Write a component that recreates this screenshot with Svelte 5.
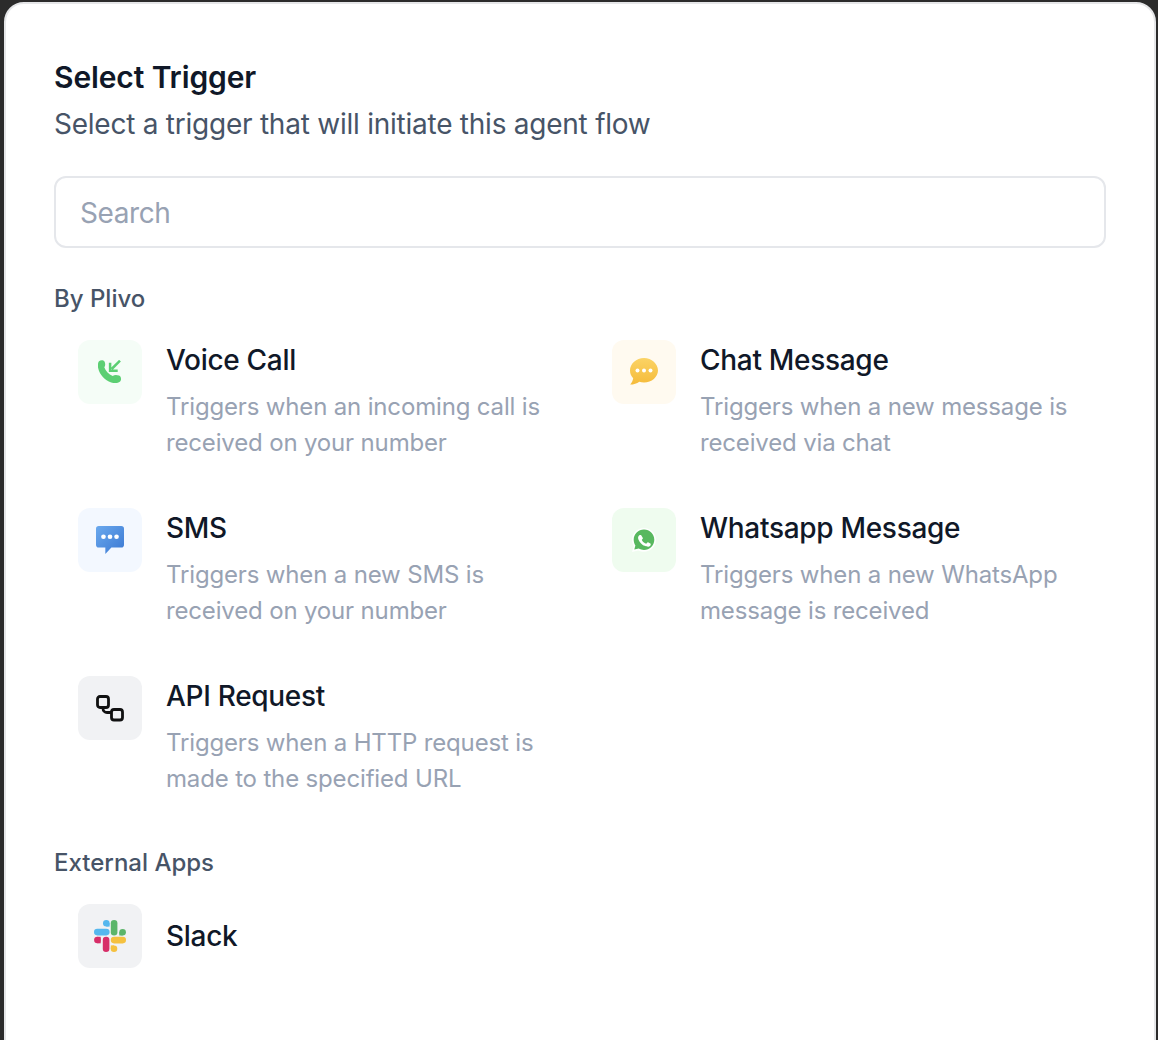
<script>
  const plivo = [
    { id: 'voice', name: 'Voice Call', tile: '#f5fdf7', lines: ['Triggers when an incoming call is', 'received on your number'] },
    { id: 'chat', name: 'Chat Message', tile: '#fffaf0', lines: ['Triggers when a new message is', 'received via chat'] },
    { id: 'sms', name: 'SMS', tile: '#f3f8ff', lines: ['Triggers when a new SMS is', 'received on your number'] },
    { id: 'whatsapp', name: 'Whatsapp Message', tile: '#effcef', lines: ['Triggers when a new WhatsApp', 'message is received'] },
    { id: 'api', name: 'API Request', tile: '#f1f2f4', lines: ['Triggers when a HTTP request is', 'made to the specified URL'] }
  ];
</script>

{#snippet icon(id)}
  {#if id === 'voice'}
    <svg width="24" height="24" viewBox="0 0 24 24" fill="none">
      <path d="M1 1.200C2.500-.2 5.500-.2 6.500 1.500 7.500 3.400 7.500 6 6.300 7.300c1.300 3.800 4.500 7 8.400 8.700 1.500-1.100 4-1.100 6.300-.4 2.400.8 2.700 4.600.8 6.200-1.600 1.300-5 1.700-8.600.7C6.800 20.500 1.700 14.800.200 8.300-.4 5.600-.2 2.600 1 1.200z" fill="#5ccf73"/>
      <path d="M22 .7L13.700 9M12.100 2.700V10.700H19.700" stroke="#5ccf73" stroke-width="2.500"/>
    </svg>
  {:else if id === 'chat'}
    <svg width="30" height="30" viewBox="0 0 30 30" fill="none">
      <defs><linearGradient id="chatfill" x1="0" y1="0" x2="0" y2="1"><stop offset="0" stop-color="#fbd365"/><stop offset="1" stop-color="#f5bb3a"/></linearGradient></defs>
      <path d="M15 1C7.300 1 1 6.600 1 13.500c0 3 1.200 5.700 3.200 7.800-.3 2.100-1.300 4.200-3 6.300 3.500 0 6.700-1.100 9.100-2.900 1.500.5 3 .8 4.700.8 7.700 0 14-5.600 14-12S22.700 1 15 1z" fill="url(#chatfill)"/>
      <circle cx="8.500" cy="13.500" r="2" fill="#fff"/><circle cx="15" cy="13.500" r="2" fill="#fff"/><circle cx="21.500" cy="13.500" r="2" fill="#fff"/>
    </svg>
  {:else if id === 'sms'}
    <svg width="28" height="28" viewBox="0 0 30 30" fill="none">
      <defs><linearGradient id="smsfill" x1="0" y1="0" x2="1" y2="1"><stop offset="0" stop-color="#6aa9ee"/><stop offset="1" stop-color="#3a78d2"/></linearGradient></defs>
      <path d="M3 0h24a3 3 0 0 1 3 3v17a3 3 0 0 1-3 3H16.500L10 30v-7H3a3 3 0 0 1-3-3V3a3 3 0 0 1 3-3z" fill="url(#smsfill)"/>
      <circle cx="8" cy="11.500" r="2.500" fill="#fff"/><circle cx="15" cy="11.500" r="2.500" fill="#fff"/><circle cx="22" cy="11.500" r="2.500" fill="#fff"/>
    </svg>
  {:else if id === 'whatsapp'}
    <svg width="26" height="26" viewBox="0 0 26 26" fill="none">
      <path d="M13 1C6.400 1 1 6.300 1 12.800c0 2.200.6 4.300 1.700 6.100L1 25l6.300-1.600c1.700.9 3.700 1.400 5.700 1.400 6.600 0 12-5.300 12-12S19.600 1 13 1z" fill="#fff" fill-opacity=".9"/>
      <path d="M13 2.500C7.300 2.500 2.700 7 2.700 12.700c0 2.100.6 4 1.700 5.700l-1.100 4.200 4.400-1.100c1.600.9 3.400 1.400 5.300 1.400 5.700 0 10.300-4.500 10.300-10.200S18.700 2.500 13 2.500z" fill="#58b85f"/>
      <path d="M9.700 7.300c-.3-.6-.6-.6-.9-.6h-.8c-.3 0-.7.100-1.100.500-.4.400-1.400 1.400-1.400 3.300s1.400 3.800 1.600 4.100c.2.300 2.800 4.400 6.900 6 3.400 1.300 4.100 1.100 4.800 1 .8-.1 2.400-1 2.700-1.900.3-.9.300-1.700.2-1.900l-3.400-1.800c-.3-.1-.6-.2-.8.200l-1.200 1.400c-.2.200-.4.300-.8.100-.4-.2-1.600-.6-3-1.800-1.100-1-1.900-2.200-2.100-2.600-.2-.4 0-.6.200-.8l.6-.7c.2-.2.200-.4.400-.6.100-.3 0-.5 0-.7z" transform="translate(2.800 2.800) scale(.78)" fill="#fff"/>
    </svg>
  {:else}
    <svg width="28" height="28" viewBox="0 0 28 28" fill="none" stroke="#111" stroke-width="2.800">
      <rect x="1.500" y="2.500" width="11" height="11" rx="2.500"/>
      <rect x="15.500" y="15.500" width="11" height="10.500" rx="2.500"/>
      <path d="M7 13.500v1a4 4 0 0 0 4 4h4.500"/>
    </svg>
  {/if}
{/snippet}

<main class="card">
  <h1>Select Trigger</h1>
  <p class="sub">Select a trigger that will initiate this agent flow</p>
  <div class="search">Search</div>

  <h2>By Plivo</h2>
  <div class="grid">
    {#each plivo as t}
      <div class="item">
        <div class="tile" style="background:{t.tile}">{@render icon(t.id)}</div>
        <div class="info">
          <div class="name">{t.name}</div>
          {#each t.lines as line}
            <div class="desc">{line}</div>
          {/each}
        </div>
      </div>
    {/each}
  </div>

  <h2 class="ext">External Apps</h2>
  <div class="item slack">
    <div class="tile" style="background:#f1f2f4">
      <svg width="32" height="32" viewBox="0 0 32 32" fill="none">
        <circle cx="12.300" cy="3.300" r="3.300" fill="#55b7ee"/>
        <rect x="12.300" y="3.300" width="3.300" height="3.300" fill="#55b7ee"/>
        <rect x="0" y="8.800" width="15.600" height="6.600" rx="3.300" fill="#55b7ee"/>
        <rect x="16.800" y="0" width="6.600" height="15.500" rx="3.300" fill="#5cb56a"/>
        <circle cx="28.600" cy="12.200" r="3.300" fill="#5cb56a"/>
        <rect x="25.300" y="12.200" width="3.300" height="3.300" fill="#5cb56a"/>
        <rect x="16.800" y="16.800" width="15.200" height="6.600" rx="3.300" fill="#f5c13f"/>
        <circle cx="20" cy="28.700" r="3.300" fill="#f5c13f"/>
        <rect x="16.800" y="25.400" width="3.200" height="3.300" fill="#f5c13f"/>
        <rect x="8.800" y="16.800" width="6.600" height="15.200" rx="3.300" fill="#d72e68"/>
        <circle cx="3.400" cy="20" r="3.300" fill="#d72e68"/>
        <rect x="3.400" y="16.800" width="3.300" height="6.500" fill="#d72e68"/>
      </svg>
    </div>
    <div class="name">Slack</div>
  </div>
</main>

<style>
  :global(body) {
    background: #2b2b2b;
    font-family: Inter, "Liberation Sans", sans-serif;
    overflow: hidden;
  }

  .card {
    box-sizing: border-box;
    margin: 2px 2px 0 4px;
    height: 1060px;
    padding: 50px 48px 0;
    background: #fff;
    border: 2px solid #e5e6e8;
    border-radius: 20px;
  }

  h1 {
    margin: 0;
    font-size: 30px;
    line-height: 46px;
    font-weight: 600;
    letter-spacing: -0.12px;
    color: #101828;
  }

  .sub {
    margin: 4px 0 0;
    font-size: 28px;
    line-height: 40px;
    letter-spacing: -0.24px;
    color: #475467;
  }

  .search {
    box-sizing: border-box;
    margin-top: 32px;
    height: 72px;
    border: 2px solid #e5e7eb;
    border-radius: 12px;
    padding: 2px 24px 0;
    display: flex;
    align-items: center;
    font-size: 28px;
    letter-spacing: -0.4px;
    color: #98a2b3;
  }

  h2 {
    margin: 35px 0 0;
    font-size: 24px;
    line-height: 32px;
    font-weight: 500;
    color: #475467;
  }

  .ext {
    margin-top: 19px;
  }

  .grid {
    display: grid;
    grid-template-columns: 518px 518px;
    column-gap: 16px;
    margin-top: 9px;
  }

  .item {
    display: flex;
    gap: 24px;
    padding: 16px 24px;
    height: 168px;
    box-sizing: border-box;
  }

  .slack {
    height: auto;
    align-items: center;
    padding-top: 25px;
  }

  .tile {
    flex: none;
    width: 64px;
    height: 64px;
    border-radius: 12px;
    display: flex;
    align-items: center;
    justify-content: center;
  }

  .name {
    font-size: 28px;
    line-height: 40px;
    font-weight: 500;
    letter-spacing: -0.3px;
    color: #101828;
  }

  .info .name {
    margin-bottom: 9px;
  }

  .desc {
    font-size: 24px;
    line-height: 36px;
    letter-spacing: -0.16px;
    color: #98a2b3;
    white-space: nowrap;
  }
</style>
